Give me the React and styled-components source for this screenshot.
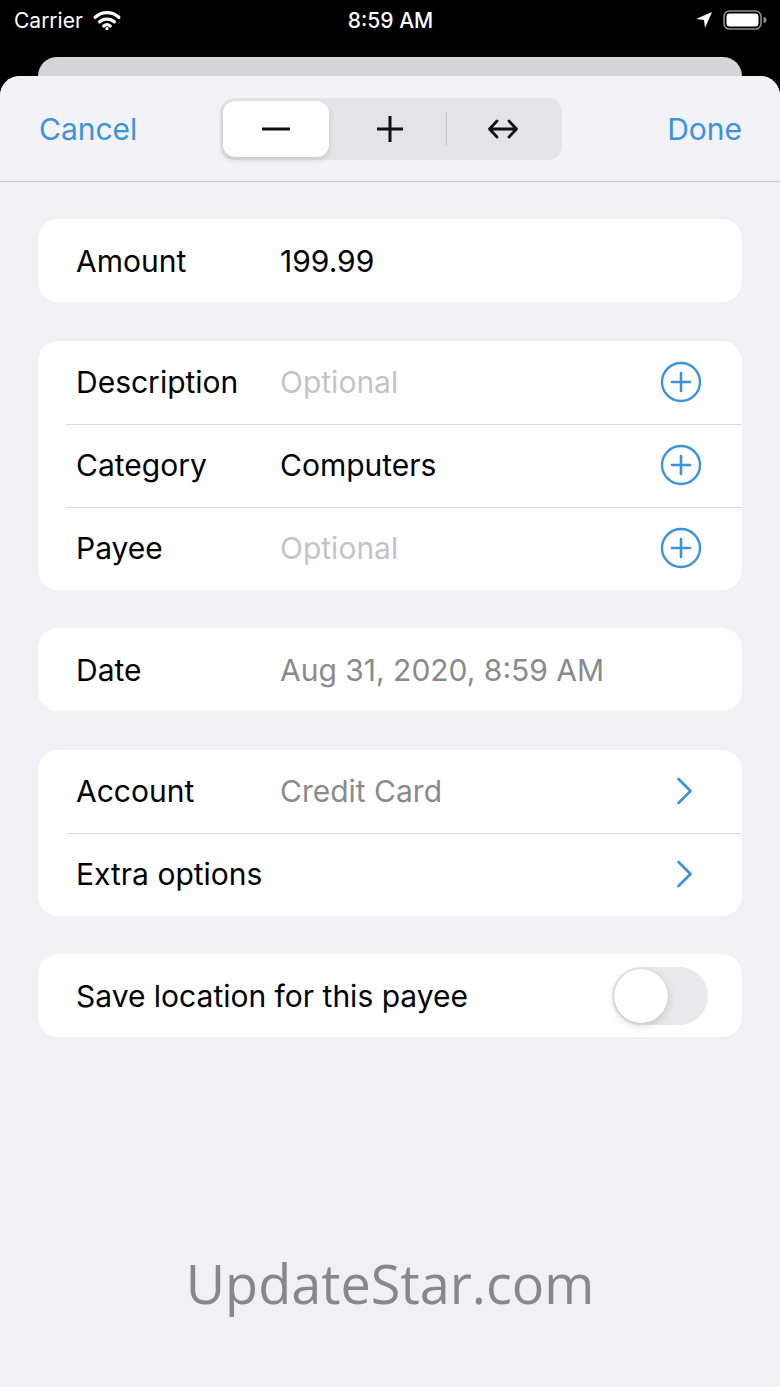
import React from "react"
import styled, { createGlobalStyle } from "styled-components"

const GlobalStyle = createGlobalStyle`
  html, body {
    margin: 0;
    padding: 0;
    background: #000;
  }
  body {
    font-family: Inter, "Noto Sans", "Liberation Sans", sans-serif;
  }
`

const BLUE = "#3b93de"

function PlusCircle() {
  return (
    <svg width="42" height="42" viewBox="0 0 42 42">
      <circle cx="21" cy="21" r="19" fill="none" stroke={BLUE} strokeWidth="2.4" />
      <path d="M21 12 V30 M12 21 H30" stroke={BLUE} strokeWidth="2.6" strokeLinecap="round" />
    </svg>
  )
}

function Chevron() {
  return (
    <svg width="24" height="28" viewBox="0 0 24 28">
      <path d="M9.5 2 L21.5 14 L9.5 26" fill="none" stroke={BLUE} strokeWidth="2.6" strokeLinecap="round" strokeLinejoin="round" />
    </svg>
  )
}

function Wifi() {
  return (
    <svg width="28" height="20" viewBox="0 0 30 22">
      <path d="M2 8 A19 19 0 0 1 28 8" fill="none" stroke="#fff" strokeWidth="3.6" strokeLinecap="round" />
      <path d="M7 13 A12 12 0 0 1 23 13" fill="none" stroke="#fff" strokeWidth="3.6" strokeLinecap="round" />
      <path d="M11.5 17.5 A5.5 5.5 0 0 1 18.5 17.5" fill="none" stroke="#fff" strokeWidth="3.6" strokeLinecap="round" />
      <circle cx="15" cy="20.5" r="1.8" fill="#fff" />
    </svg>
  )
}

function LocationArrow() {
  return (
    <svg width="18" height="18" viewBox="0 0 18 18">
      <path d="M17 1 L1 8 L9 9 L10 17 Z" fill="#fff" />
    </svg>
  )
}

function Battery() {
  return (
    <svg width="44" height="20" viewBox="0 0 44 20">
      <rect x="1" y="1" width="37" height="18" rx="5.5" fill="none" stroke="#8e8e8e" strokeWidth="1.6" />
      <rect x="3.5" y="3.5" width="32" height="13" rx="3" fill="#fff" />
      <path d="M40.5 7 V13 A3 3 0 0 0 40.5 7 Z" fill="#8e8e8e" />
    </svg>
  )
}

function Row({ label, value, muted, placeholder, accessory, divider }) {
  return (
    <RowWrap divider={divider}>
      <Label>{label}</Label>
      {value ? <Value tone={placeholder ? "placeholder" : muted ? "muted" : "normal"}>{value}</Value> : <Value />}
      {accessory && <Accessory>{accessory}</Accessory>}
    </RowWrap>
  )
}

export default function App() {
  return (
    <>
      <GlobalStyle />
      <Screen>
        <StatusBar>
          <StatusLeft>
            Carrier <Wifi />
          </StatusLeft>
          <Clock>8:59 AM</Clock>
          <StatusRight>
            <LocationArrow />
            <Battery />
          </StatusRight>
        </StatusBar>

        <Peek />

        <Sheet>
          <Header>
            <NavButton>Cancel</NavButton>
            <Segmented>
              <Segment active>
                <svg width="28" height="4" viewBox="0 0 28 4">
                  <rect x="0" y="0.5" width="28" height="3" fill="#111" />
                </svg>
              </Segment>
              <Segment>
                <svg width="28" height="28" viewBox="0 0 28 28">
                  <path d="M14 1 V27 M1 14 H27" stroke="#111" strokeWidth="3" />
                </svg>
              </Segment>
              <SegDivider />
              <Segment>
                <svg width="32" height="22" viewBox="0 0 32 22">
                  <path d="M3 11 H29 M10 3 L2.5 11 L10 19 M22 3 L29.5 11 L22 19" fill="none" stroke="#111" strokeWidth="2.8" strokeLinecap="round" strokeLinejoin="round" />
                </svg>
              </Segment>
            </Segmented>
            <NavButton>Done</NavButton>
          </Header>

          <Body>
            <Card>
              <Row label="Amount" value="199.99" />
            </Card>

            <Card>
              <Row label="Description" value="Optional" placeholder accessory={<PlusCircle />} />
              <Row label="Category" value="Computers" accessory={<PlusCircle />} divider />
              <Row label="Payee" value="Optional" placeholder accessory={<PlusCircle />} divider />
            </Card>

            <Card>
              <Row label="Date" value="Aug 31, 2020, 8:59 AM" muted />
            </Card>

            <Card>
              <Row label="Account" value="Credit Card" muted accessory={<Chevron />} />
              <Row label="Extra options" accessory={<Chevron />} divider />
            </Card>

            <Card>
              <RowWrap>
                <WideLabel>Save location for this payee</WideLabel>
                <Toggle>
                  <Knob />
                </Toggle>
              </RowWrap>
            </Card>

            <Watermark>UpdateStar.com</Watermark>
          </Body>
        </Sheet>
      </Screen>
    </>
  )
}

const Screen = styled.div`
  width: 780px;
  height: 1387px;
  background: #000;
  display: flex;
  flex-direction: column;
  overflow: hidden;
`

const StatusBar = styled.div`
  height: 40px;
  padding: 0 13px 0 14px;
  display: flex;
  align-items: center;
  justify-content: space-between;
  color: #fff;
  font-family: Inter, "Liberation Sans", sans-serif;
`

const StatusLeft = styled.div`
  display: flex;
  align-items: center;
  gap: 10px;
  font-size: 21px;
  width: 200px;
`

const Clock = styled.div`
  font-size: 21px;
  font-weight: 500;
`

const StatusRight = styled.div`
  display: flex;
  align-items: center;
  justify-content: flex-end;
  gap: 10px;
  width: 200px;
`

const Peek = styled.div`
  margin: 17px 38px 0;
  height: 19px;
  background: #d4d4d9;
  border-radius: 20px 20px 0 0;
`

const Sheet = styled.div`
  flex: 1;
  background: #f0f0f5;
  border-radius: 20px 20px 0 0;
  display: flex;
  flex-direction: column;
`

const Header = styled.div`
  height: 105px;
  padding: 0 38px 0 39px;
  display: flex;
  align-items: center;
  justify-content: space-between;
  border-bottom: 1px solid #c9c9ce;
  background: #f2f2f7;
  border-radius: 20px 20px 0 0;
`

const NavButton = styled.div`
  color: ${BLUE};
  font-size: 30px;
  width: 140px;

  &:last-child {
    text-align: right;
  }
`

const Segmented = styled.div`
  width: 342px;
  height: 62px;
  box-sizing: border-box;
  padding: 3px;
  background: #e3e3e8;
  border-radius: 14px;
  display: flex;
  align-items: center;
`

const Segment = styled.div`
  flex: ${p => (p.active ? "0 0 106px" : "1")};
  margin-right: ${p => (p.active ? "6px" : "0")};
  height: 56px;
  display: flex;
  align-items: center;
  justify-content: center;
  border-radius: 12px;
  background: ${p => (p.active ? "#fff" : "transparent")};
  box-shadow: ${p => (p.active ? "0 3px 6px rgba(0,0,0,0.12), 0 0 1px rgba(0,0,0,0.08)" : "none")};
`

const SegDivider = styled.div`
  width: 1px;
  height: 34px;
  background: #c7c7cc;
`

const Body = styled.div`
  padding: 37px 38px 0;
  display: flex;
  flex-direction: column;
  gap: 38.5px;
`

const Card = styled.div`
  background: #fff;
  border-radius: 20px;
  overflow: hidden;
`

const RowWrap = styled.div`
  position: relative;
  height: 83px;
  display: flex;
  align-items: center;
  padding: 0 39px 0 38px;

  &::before {
    content: "";
    display: ${p => (p.divider ? "block" : "none")};
    position: absolute;
    top: 0;
    left: 28px;
    right: 0;
    height: 1px;
    background: #d9d9dd;
  }
`

const Label = styled.div`
  width: 204px;
  flex-shrink: 0;
  font-size: 30px;
  color: #000;
`

const WideLabel = styled.div`
  flex: 1;
  font-size: 30px;
  color: #000;
`

const Value = styled.div`
  flex: 1;
  font-size: 30px;
  color: ${p =>
    p.tone === "placeholder" ? "#c4c4c7" : p.tone === "muted" ? "#8a8a8e" : "#000"};
`

const Accessory = styled.div`
  width: 62px;
  display: flex;
  align-items: center;
  justify-content: center;
  margin-right: -9px;
`

const Toggle = styled.div`
  width: 96px;
  height: 58px;
  border-radius: 29px;
  background: #e9e9eb;
  margin-right: -5px;
  display: flex;
  align-items: center;
  padding: 2px;
  box-sizing: border-box;
`

const Knob = styled.div`
  width: 54px;
  height: 54px;
  border-radius: 50%;
  background: #fff;
  box-shadow: 0 3px 8px rgba(0,0,0,0.15), 0 0 1px rgba(0,0,0,0.2);
`

const Watermark = styled.div`
  margin-top: 170px;
  text-align: center;
  font-family: "Open Sans", "Noto Sans", sans-serif;
  font-size: 54px;
  color: #88888c;
`
